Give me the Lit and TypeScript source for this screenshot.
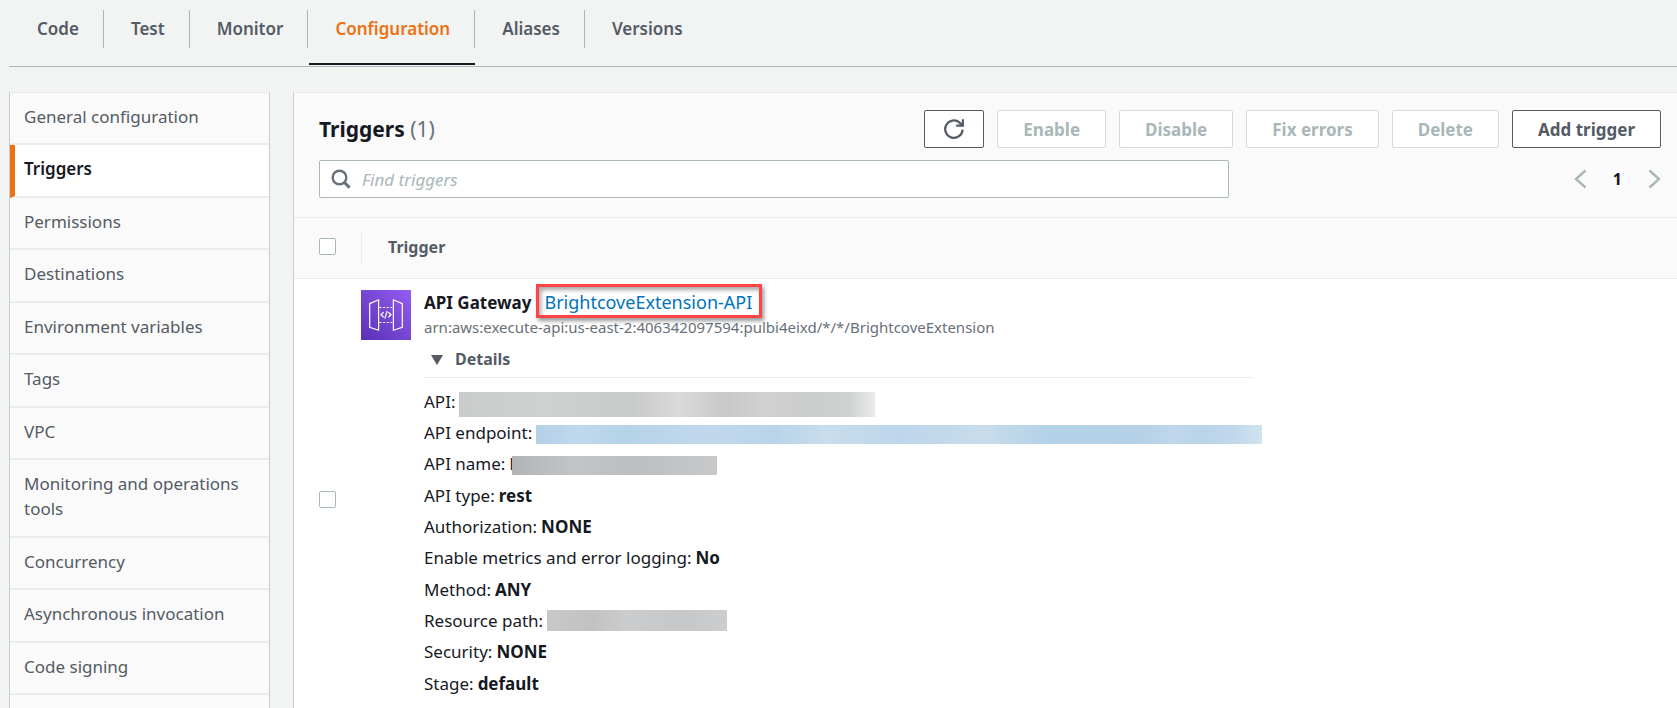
import { LitElement, html, css, svg } from "lit";
import { customElement, state } from "lit/decorators.js";
import { classMap } from "lit/directives/class-map.js";

interface Detail {
  label: string;
  value?: string;
  mask?: string;
  peek?: string;
}

const TABS = ["Code", "Test", "Monitor", "Configuration", "Aliases", "Versions"];

const SECTIONS = [
  "General configuration",
  "Triggers",
  "Permissions",
  "Destinations",
  "Environment variables",
  "Tags",
  "VPC",
  "Monitoring and operations tools",
  "Concurrency",
  "Asynchronous invocation",
  "Code signing",
];

const DETAILS: Detail[] = [
  { label: "API", mask: "mask-api" },
  { label: "API endpoint", mask: "mask-endpoint" },
  { label: "API name", mask: "mask-name", peek: "l" },
  { label: "API type", value: "rest" },
  { label: "Authorization", value: "NONE" },
  { label: "Enable metrics and error logging", value: "No" },
  { label: "Method", value: "ANY" },
  { label: "Resource path", mask: "mask-path" },
  { label: "Security", value: "NONE" },
  { label: "Stage", value: "default" },
];

const gatewayIcon = svg`
  <defs>
    <linearGradient id="gw" x1="0" y1="1" x2="1" y2="0">
      <stop offset="0" stop-color="#5a30b5" />
      <stop offset="1" stop-color="#945df2" />
    </linearGradient>
  </defs>
  <rect width="50" height="50" fill="url(#gw)" />
  <g fill="none" stroke="#fff">
    <path d="M8.7 13.6 17.6 9.8V40.2L8.7 37.4Z" stroke-width="1.2" />
    <path d="M41.3 13.6 32.4 9.8V40.2L41.3 37.4Z" stroke-width="1.2" />
    <path d="M18.5 17.5H32M18.5 32.5H32" stroke-width="1.1" stroke-dasharray="2 1.6" />
    <path d="M22.6 22.3 20 24.8 22.6 27.3M27.4 22.3 30 24.8 27.4 27.3M26.2 21 23.8 28.6" stroke-width="1.2" />
  </g>`;

@customElement("app-root")
export class AppRoot extends LitElement {
  @state() private open = true;

  static styles = css`
    :host {
      display: block;
      min-height: 100vh;
      overflow: hidden;
      background: #f2f3f3;
      color: #16191f;
      font: 17px/25px "Noto Sans", "Open Sans", sans-serif;
    }
    * {
      box-sizing: border-box;
    }
    a {
      text-decoration: none;
      color: inherit;
    }
    ul {
      list-style: none;
      margin: 0;
      padding: 0;
    }
    .tabs {
      display: flex;
      margin-left: 9px;
      padding: 10px 0 0 2px;
      border-bottom: 1px solid #aab7b8;
      font-weight: 600;
      color: #545b64;
    }
    .tab {
      display: flex;
      padding-bottom: 15px;
      margin-right: 1px;
      border-bottom: 2px solid transparent;
      margin-bottom: 1px;
    }
    .tab a {
      display: block;
      padding: 6px 25px 7px 26px;
    }
    .tab:not(:last-child) {
      background: linear-gradient(#aab7b8, #aab7b8) right top / 1px 38px no-repeat;
    }
    .tab.active {
      color: #ec7211;
      border-bottom-color: #16191f;
    }
    .layout {
      display: grid;
      grid-template-columns: 261px minmax(0, 1fr);
      gap: 23px;
      margin: 25px 0 0 9px;
    }
    .side,
    .panel {
      border: 1px solid #c9cdce;
      border-top-color: #eaeded;
      background: #fafafa;
    }
    .side {
      color: #545b64;
    }
    .side a {
      display: block;
      padding: 11px 20px 14px 14px;
      border-bottom: 2px solid #eaeded;
    }
    .side li:nth-child(even) a {
      padding-bottom: 15px;
    }
    .side a.current {
      padding-left: 9px;
      border-left: 5px solid #ec7211;
      background: #fff;
      color: #16191f;
      font-weight: 600;
    }
    .panel {
      border-right: 0;
    }
    .head {
      display: grid;
      gap: 12px;
      padding: 17px 16px 19px 25px;
    }
    .bar {
      display: flex;
      justify-content: space-between;
      align-items: center;
    }
    h2 {
      margin: 0;
      font-size: 21px;
      line-height: 28px;
      font-weight: 700;
    }
    .count {
      font-weight: 400;
      color: #687078;
    }
    .actions {
      display: flex;
      gap: 13px;
    }
    button {
      font: inherit;
      color: inherit;
      background: none;
      border: 0;
      padding: 0;
    }
    .btn {
      display: flex;
      align-items: center;
      height: 38px;
      padding: 0 25px;
      border: 1px solid #545b64;
      border-radius: 2px;
      background: #fff;
      color: #545b64;
      font-weight: 700;
    }
    .btn:disabled {
      border-color: #d5dbdb;
      color: #aab7b8;
    }
    .btn.icon {
      padding: 0 18px;
    }
    svg {
      display: block;
    }
    .search {
      display: flex;
      align-items: center;
      gap: 11px;
      flex: 0 1 910px;
      height: 38px;
      padding: 0 12px 0 11px;
      border: 1px solid #aab7b8;
      border-radius: 2px;
      background: #fff;
    }
    .search input {
      flex: 1;
      min-width: 0;
      border: 0;
      padding: 0;
      outline: 0;
      background: none;
      font: inherit;
      color: inherit;
    }
    .search input::placeholder {
      color: #aab7b8;
      font-style: italic;
      opacity: 1;
    }
    .pager {
      display: flex;
      align-items: center;
      gap: 26px;
      font-size: 16px;
      font-weight: 700;
    }
    table {
      width: 100%;
      border-collapse: collapse;
      background: #fff;
    }
    th {
      background: #fafafa;
      border-top: 1px solid #eaeded;
      border-bottom: 1px solid #eaeded;
      text-align: left;
      font-size: 16px;
      font-weight: 700;
      color: #545b64;
      padding: 15px 0;
    }
    .pick {
      width: 67px;
      padding-left: 25px;
      vertical-align: middle;
    }
    th.pick {
      padding-bottom: 18px;
    }
    .name {
      display: block;
      border-left: 1px solid #eaeded;
      padding: 2px 0 3px 26px;
    }
    td {
      padding: 11px 0 25px;
      vertical-align: top;
    }
    td.pick {
      padding-bottom: 11px;
      padding-top: 0;
      padding: 0 0 8px 25px;
      vertical-align: middle;
    }
    input[type="checkbox"] {
      appearance: none;
      display: block;
      width: 17px;
      height: 17px;
      margin: 0;
      border: 1px solid #aab7b8;
      border-radius: 2px;
      background: #fff;
    }
    .trigger {
      display: grid;
      grid-template-columns: 50px minmax(0, 838px);
      gap: 13px;
    }
    .service {
      display: flex;
      font-size: 18px;
    }
    .service strong {
      font-size: 17px;
    }
    .marked {
      margin: -6px 0 -3px 5px;
      padding: 3px 7px 0 5px;
      border: 3px solid #ff4545;
      box-shadow: 2px 3px 4px rgba(0, 0, 0, 0.4), inset 2px 3px 4px rgba(0, 0, 0, 0.35);
      color: #0073bb;
    }
    .arn {
      font-size: 15px;
      line-height: 20px;
      margin-top: 2px;
      color: #687078;
    }
    .toggle {
      display: flex;
      align-items: center;
      gap: 12px;
      width: calc(100% - 8px);
      margin-top: 10px;
      padding: 0 0 5px 7px;
      border-bottom: 1px solid #eaeded;
      color: #545b64;
      font-size: 16px;
      font-weight: 700;
    }
    .details {
      margin-top: 11px;
    }
    .details li {
      display: flex;
      align-items: center;
      gap: 4px;
      margin-bottom: 6px;
      white-space: nowrap;
    }
    .details li:nth-child(3n) {
      margin-bottom: 7px;
    }
    .mask {
      flex: none;
      height: 19px;
      margin-top: 4px;
    }
    .mask-api {
      width: 416px;
      height: 25px;
      margin: 3px 0 -3px;
      background: linear-gradient(90deg, #cacbcb, #cfd0d0 20%, #c9caca 42%, #dadada 53%, #c7c8c8 64%, #d1d1d1 73%, #cbcccc 83%, #d0d1d1 94%, #ebecec);
    }
    .mask-endpoint {
      width: 726px;
      background: linear-gradient(90deg, #b3d1e8, #c0d8ed 6%, #b5d3e8 12%, #c1d8ec 24%, #b9d4e9 33%, #c8dded 40%, #bdd6eb 50%, #c8dcec 62%, #b4d2e8 70%, #b4d1e7 83%, #c0d6eb 88%, #b8d5e8 92%, #c1d7ec 96%, #d0e3ef);
    }
    .mask-name {
      width: 205px;
      margin-left: -6px;
      background: linear-gradient(90deg, #b1b4b7, #c3c4c6 30%, #bdbec0 60%, #c8c9cb);
    }
    .mask-path {
      width: 180px;
      height: 21px;
      margin-top: 0;
      background: linear-gradient(90deg, #c8c8c8, #c2c2c2 25%, #cbccce 45%, #c6c7c9 75%, #cccdcf);
    }
  `;

  private detail(d: Detail) {
    return html`<li>
      <span>${d.label}:</span>
      ${d.value ? html`<strong>${d.value}</strong>` : ""}
      ${d.peek ? html`<span>${d.peek}</span>` : ""}
      ${d.mask ? html`<span class="mask ${d.mask}"></span>` : ""}
    </li>`;
  }

  render() {
    return html`
      <nav class="tabs" aria-label="Function">
        ${TABS.map(
          (t) => html`<div class=${classMap({ tab: true, active: t === "Configuration" })}>
            <a href="#">${t}</a>
          </div>`
        )}
      </nav>
      <div class="layout">
        <nav class="side" aria-label="Configuration">
          <ul>
            ${SECTIONS.map(
              (s) => html`<li><a href="#" class=${classMap({ current: s === "Triggers" })}>${s}</a></li>`
            )}
          </ul>
        </nav>
        <main class="panel">
          <div class="head">
            <div class="bar">
              <h2>Triggers <span class="count">(1)</span></h2>
              <div class="actions">
                <button class="btn icon" aria-label="Refresh">
                  <svg width="22" height="22" viewBox="0 0 22 22" fill="none" stroke="#545b64" stroke-width="2.2">
                    <path d="M19.6 11.6A8.7 8.7 0 1 1 16.6 4.6L19.6 7.6" />
                    <path d="M19.9 1.2V7.7H13.2" />
                  </svg>
                </button>
                <button class="btn" disabled>Enable</button>
                <button class="btn" disabled>Disable</button>
                <button class="btn" disabled>Fix errors</button>
                <button class="btn" disabled>Delete</button>
                <button class="btn">Add trigger</button>
              </div>
            </div>
            <div class="bar">
              <label class="search">
                <svg width="20" height="20" viewBox="0 0 20 20" fill="none" stroke="#687078" stroke-width="2.4">
                  <circle cx="8.5" cy="8.5" r="6.8" />
                  <path d="M13.2 13.2 18.6 18.6" stroke-width="3" />
                </svg>
                <input type="text" placeholder="Find triggers" aria-label="Find triggers" />
              </label>
              <div class="pager">
                <button aria-label="Previous page">
                  <svg width="13" height="20" viewBox="0 0 13 20" fill="none" stroke="#aab7b8" stroke-width="2.4">
                    <path d="M11.5 1.5 2 10 11.5 18.5" />
                  </svg>
                </button>
                <span>1</span>
                <button aria-label="Next page">
                  <svg width="13" height="20" viewBox="0 0 13 20" fill="none" stroke="#aab7b8" stroke-width="2.4">
                    <path d="M1.5 1.5 11 10 1.5 18.5" />
                  </svg>
                </button>
              </div>
            </div>
          </div>
          <table>
            <thead>
              <tr>
                <th class="pick"><input type="checkbox" aria-label="Select all triggers" /></th>
                <th><span class="name">Trigger</span></th>
              </tr>
            </thead>
            <tbody>
              <tr>
                <td class="pick"><input type="checkbox" aria-label="Select API Gateway" /></td>
                <td>
                  <div class="trigger">
                    <svg width="50" height="50" viewBox="0 0 50 50">${gatewayIcon}</svg>
                    <div>
                      <div class="service">
                        <strong>API Gateway</strong>
                        <a class="marked" href="#">BrightcoveExtension-API</a>
                      </div>
                      <div class="arn">arn:aws:execute-api:us-east-2:406342097594:pulbi4eixd/*/*/BrightcoveExtension</div>
                      <button
                        class="toggle"
                        aria-expanded=${this.open ? "true" : "false"}
                        @click=${() => (this.open = !this.open)}
                      >
                        <svg width="12" height="10" viewBox="0 0 12 10"><path d="M0 0H12L6 10Z" fill="#545b64" /></svg>
                        Details
                      </button>
                      ${this.open ? html`<ul class="details">${DETAILS.map((d) => this.detail(d))}</ul>` : ""}
                    </div>
                  </div>
                </td>
              </tr>
            </tbody>
          </table>
        </main>
      </div>
    `;
  }
}
